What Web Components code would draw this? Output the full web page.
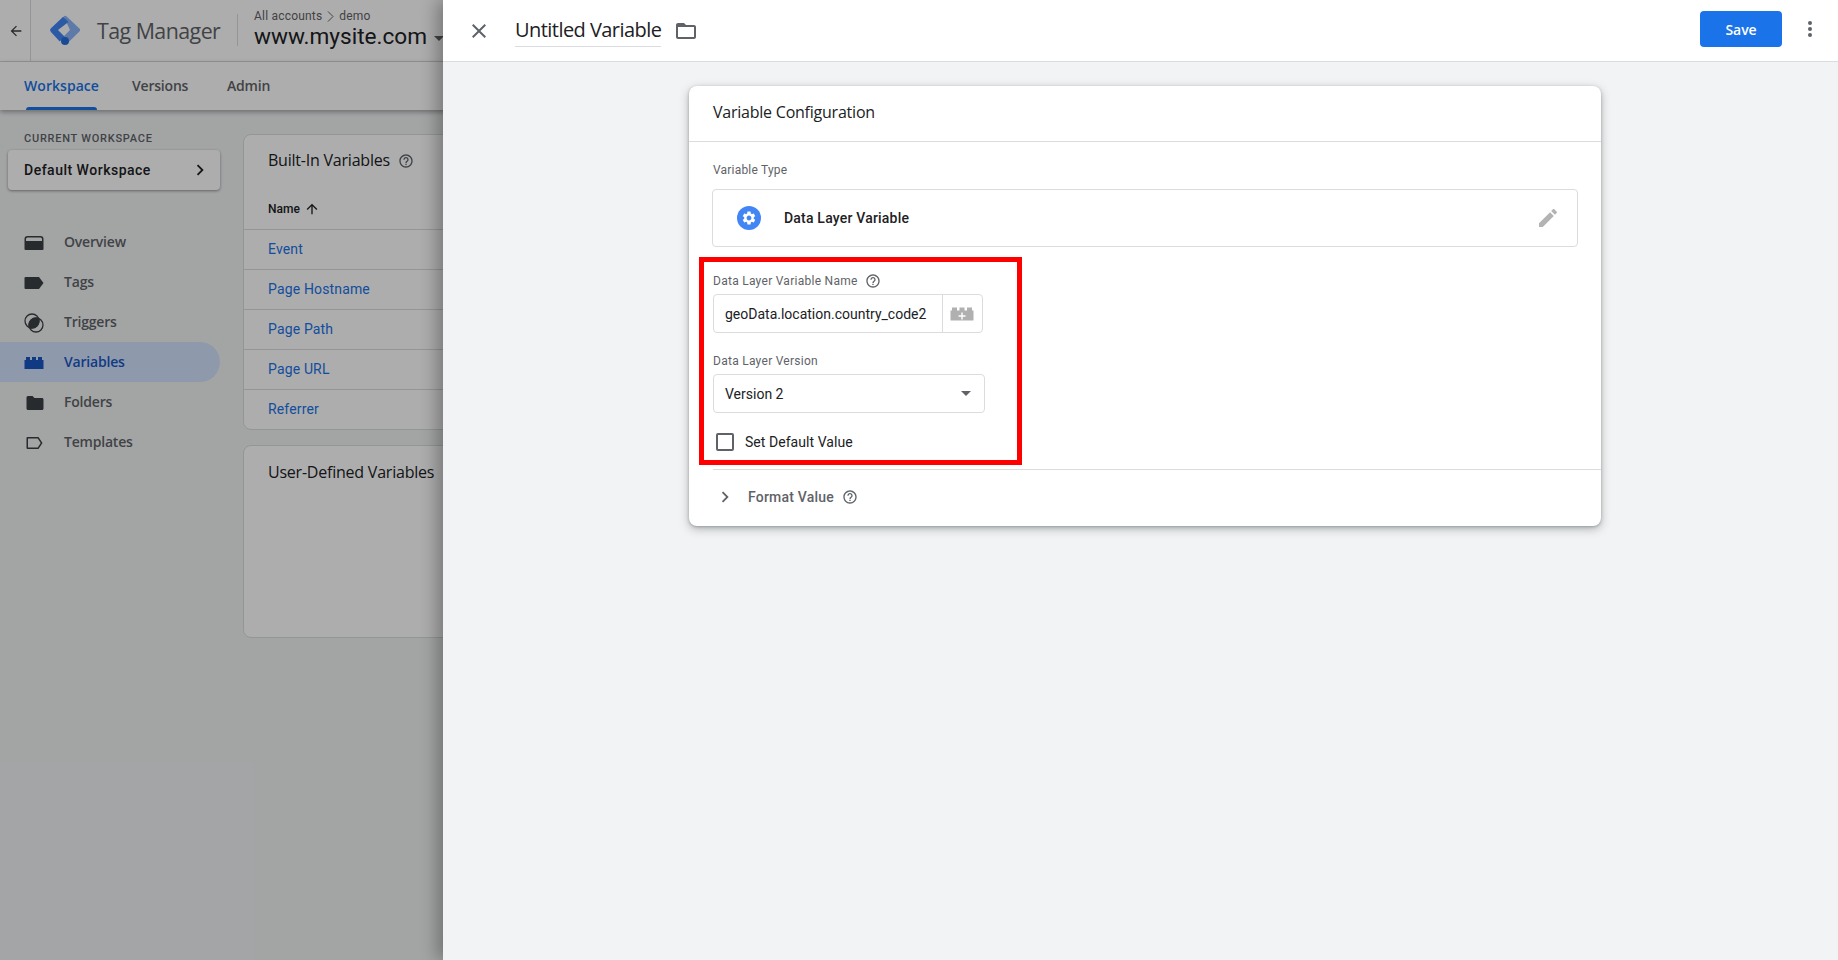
<!DOCTYPE html>
<html>
<head>
<meta charset="utf-8">
<title>Tag Manager</title>
<style>
  html, body { margin: 0; height: 100%; overflow: hidden; }
  body { font-family: Roboto, "Liberation Sans", sans-serif; color: #202124; }
</style>
</head>
<body>
<gtm-app></gtm-app>

<script>
const ICONS = {
  back: '<path d="M20 11H7.83l5.59-5.59L12 4l-8 8 8 8 1.41-1.41L7.83 13H20z"/>',
  close: '<path d="M19 6.41 17.59 5 12 10.59 6.41 5 5 6.41 10.59 12 5 17.59 6.41 19 12 13.41 17.59 19 19 17.59 13.41 12z"/>',
  chevron: '<path d="M8.59 16.59 13.17 12 8.59 7.41 10 6l6 6-6 6z"/>',
  help: '<path d="M11 18h2v-2h-2v2zm1-16C6.48 2 2 6.48 2 12s4.48 10 10 10 10-4.48 10-10S17.52 2 12 2zm0 18c-4.41 0-8-3.59-8-8s3.59-8 8-8 8 3.59 8 8-3.59 8-8 8zm0-14c-2.21 0-4 1.79-4 4h2c0-1.1.9-2 2-2s2 .9 2 2c0 2-3 1.75-3 5h2c0-2.25 3-2.5 3-5 0-2.21-1.79-4-4-4z"/>',
  upward: '<path d="M4 12l1.41 1.41L11 7.83V20h2V7.83l5.58 5.59L20 12l-8-8-8 8z"/>',
  folderOpen: '<path d="M20 6h-8l-2-2H4c-1.1 0-1.99.9-1.99 2L2 18c0 1.1.9 2 2 2h16c1.1 0 2-.9 2-2V8c0-1.1-.9-2-2-2zm0 12H4V8h16v10z"/>',
  edit: '<path d="M3 17.25V21h3.75L17.81 9.94l-3.75-3.75L3 17.25zM20.71 7.04c.39-.39.39-1.02 0-1.41l-2.34-2.34c-.39-.39-1.02-.39-1.41 0l-1.83 1.83 3.75 3.75 1.83-1.83z"/>',
  more: '<circle cx="12" cy="6" r="2"/><circle cx="12" cy="12" r="2"/><circle cx="12" cy="18" r="2"/>',
  gear: '<path d="M19.14 12.94c.04-.3.06-.61.06-.94 0-.32-.02-.64-.07-.94l2.03-1.58a.49.49 0 0 0 .12-.61l-1.92-3.32a.488.488 0 0 0-.59-.22l-2.39.96c-.5-.38-1.03-.7-1.62-.94l-.36-2.54a.484.484 0 0 0-.48-.41h-3.84c-.24 0-.43.17-.47.41l-.36 2.54c-.59.24-1.13.57-1.62.94l-2.39-.96c-.22-.08-.47 0-.59.22L2.74 8.87c-.12.21-.08.47.12.61l2.03 1.58c-.05.3-.09.63-.09.94s.02.64.07.94l-2.03 1.58a.49.49 0 0 0-.12.61l1.92 3.32c.12.22.37.29.59.22l2.39-.96c.5.38 1.03.7 1.62.94l.36 2.54c.05.24.24.41.48.41h3.84c.24 0 .44-.17.47-.41l.36-2.54c.59-.24 1.13-.56 1.62-.94l2.39.96c.22.08.47 0 .59-.22l1.92-3.32c.12-.22.07-.47-.12-.61l-2.01-1.58zM12 15.6c-1.98 0-3.6-1.62-3.6-3.6s1.62-3.6 3.6-3.6 3.6 1.62 3.6 3.6-1.62 3.6-3.6 3.6z"/>',
  // sidebar glyphs, 24 box, 19 wide like the GTM ones
  overview: '<path d="M2.5 11V9Q2.5 6 5.500 6H18.500Q21.500 6 21.500 9V11H20V9Q20 7.500 18.500 7.500H5.500Q4 7.500 4 9V11z"/><path d="M2.500 11h19v8a1 1 0 0 1-1 1h-17a1 1 0 0 1-1-1z"/>',
  tags: '<path d="M3.500 7H17L21.500 13 17 19H3.500a1 1 0 0 1-1-1V8a1 1 0 0 1 1-1z"/>',
  triggers: '<circle cx="10" cy="11" r="7" fill="none" stroke="currentColor" stroke-width="1.300"/><circle cx="14" cy="15" r="7" fill="none" stroke="currentColor" stroke-width="1.300"/><path d="M16.910 8.090A7.500 7.500 0 0 0 7.090 17.910 7.500 7.500 0 0 0 16.910 8.090z"/>',
  variables: '<path d="M2.500 10H4V7H8V10H10V7H14V10H16V7H20V10H21.500V19H2.500z"/>',
  folder: '<path d="M10.500 6H6C5 6 4.500 6.800 4.500 7.500V18.500C4.500 19.400 5.200 20 6 20H20C20.900 20 21.500 19.400 21.500 18.500V9.500C21.500 8.600 20.900 8 20 8H12.500z"/>',
  templates: '<path fill-rule="evenodd" d="M5.500 7H16.500L20.500 13 16.500 19H5.500a1 1 0 0 1-1-1V8a1 1 0 0 1 1-1zM6 8.500V17.500H15.700L18.700 13 15.700 8.500z"/>',
  addVar: '<path fill-rule="evenodd" d="M.5 8.500H2V5.500H7V8.500H9.500V5.500H14.500V8.500H17V5.500H22V8.500H23.500V18.500H.5zM11.300 10.500V13.300H8.500V14.700H11.300V17.500H12.700V14.700H15.500V13.300H12.700V10.500z"/>'
};

// small base class so each element only has to give its template
class GtmElement extends HTMLElement {
  constructor() {
    super();
    this.attachShadow({ mode: 'open' });
    const t = document.createElement('template');
    t.innerHTML = this.markup();
    this.shadowRoot.appendChild(t.content.cloneNode(true));
  }
  attr(name, fallback = '') {
    return this.hasAttribute(name) ? this.getAttribute(name) : fallback;
  }
  markup() { return ''; }
}

class GtmIcon extends GtmElement {
  markup() {
    const size = this.attr('size', '24');
    const w = this.attr('width', size);
    return `<style>
      :host { display: inline-flex; flex: none; color: inherit; }
      svg { display: block; fill: currentColor; }
    </style>
    <svg width="${w}" height="${size}" viewBox="0 0 24 24" preserveAspectRatio="none">${ICONS[this.attr('name')] || ''}</svg>`;
  }
}

class GtmHeader extends GtmElement {
  markup() {
    return `<style>
      :host { display: flex; align-items: stretch; height: 61px; background: #fff; border-bottom: 1px solid #dadce0; }
      .back { width: 31px; box-sizing: border-box; border-right: 1px solid #dadce0; display: flex; align-items: center; justify-content: center; padding-left: 1px; color: #3c4043; }
      .logo { margin: 15px 17px 0 19px; }
      .product { font: 400 21.4px/62px "Open Sans", sans-serif; letter-spacing: -.55px; color: #5f6368; white-space: nowrap; width: 140px; }
      .sep { width: 1px; height: 32px; margin: 14px 16px 0 0; background: #dadce0; }
      .crumb { font: 400 12px/14px Roboto, sans-serif; letter-spacing: .2px; color: #5f6368; margin-top: 9px; display: flex; align-items: center; gap: 5px; }
      .crumb svg { width: 7px; height: 11px; fill: none; stroke: #5f6368; stroke-width: 1; }
      .site { font: 400 22.6px/26px Roboto, sans-serif; color: #202124; white-space: nowrap; margin-top: 1px; }
      .caret { display: inline-block; width: 0; height: 0; border: 5px solid transparent; border-top-color: #5f6368; border-bottom: 0; margin-left: 7px; vertical-align: middle; }
    </style>
    <div class="back"><gtm-icon name="back" size="16"></gtm-icon></div>
    <svg class="logo" width="30" height="30" viewBox="0 0 30 30">
      <path d="M13.700 1.300a2 2 0 0 1 2.700 0l13 12.200a2 2 0 0 1 0 3L17 28.800l-5.300-5.300L20 15z" fill="#8ab4f8"/>
      <path d="M13.200 1.800 18.400 7 8 15l6.500 6.500-4.800 5-8.500-9.300a3 3 0 0 1 0-4.300z" fill="#4285f4"/>
      <circle cx="15" cy="26" r="4" fill="#246fdb"/>
    </svg>
    <div class="product">Tag Manager</div>
    <div class="sep"></div>
    <div>
      <div class="crumb">All accounts <svg viewBox="0 0 7 11"><path d="M1 .5 6 5.500 1 10.500"/></svg> demo</div>
      <div class="site">www.mysite.com<span class="caret"></span></div>
    </div>`;
  }
}

class GtmTabs extends GtmElement {
  markup() {
    return `<style>
      :host { display: flex; height: 48px; background: #fff; position: relative; z-index: 1; box-shadow: 0 2px 5px rgba(0,0,0,.35); padding-left: 24px;
              font: 600 14px/48px "Open Sans", sans-serif; letter-spacing: -.2px; color: #5f6368; }
      div { position: relative; }
      .on { color: #1a73e8; width: 75px; margin-right: 33px; letter-spacing: .05px; }
      .on::after { content: ""; position: absolute; left: 2px; right: 2px; bottom: 0; height: 3px; background: #1a73e8; border-radius: 3px 3px 0 0; }
      .mid { width: 56px; margin-right: 39px; }
    </style>
    <div class="on">Workspace</div><div class="mid">Versions</div><div>Admin</div>`;
  }
}

class GtmNavItem extends GtmElement {
  markup() {
    return `<style>
      :host { display: flex; align-items: center; height: 40px; padding-left: 21.5px; gap: 18.5px;
              font: 600 14px/20px "Open Sans", sans-serif; letter-spacing: -.2px; color: #5f6368; border-radius: 0 20px 20px 0; }
      :host([active]) { background: #d2e3fc; color: #1a56c4; }
      gtm-icon { color: #3c4043; }
      :host([active]) gtm-icon { color: #1a56c4; }
    </style>
    <gtm-icon name="${this.attr('icon')}" size="24"></gtm-icon><slot></slot>`;
  }
}

class GtmSidebar extends GtmElement {
  markup() {
    return `<style>
      :host { display: block; width: 220px; flex: none; }
      .label { font: 500 11px/13px Roboto, sans-serif; letter-spacing: .75px; color: #5f6368; margin: 22px 0 5px 24px; }
      .ws { height: 40px; margin-left: 8px; padding: 0 15px 0 16px; display: flex; align-items: center; justify-content: space-between; background: #fff; border-radius: 4px;
            box-shadow: 0 1px 3px rgba(60,64,67,.55); font: 500 14px/20px Roboto, sans-serif; letter-spacing: .5px; color: #202124; }
      nav { margin-top: 32px; display: block; }
    </style>
    <div class="label">CURRENT WORKSPACE</div>
    <div class="ws">Default Workspace <gtm-icon name="chevron" size="22" style="margin-right:-6px"></gtm-icon></div>
    <nav><slot></slot></nav>`;
  }
}

class GtmVarTable extends GtmElement {
  markup() {
    const sortable = this.hasAttribute('sortable');
    return `<style>
      :host { display: block; background: #fff; border: 1px solid #dadce0; border-radius: 8px; width: 1400px; box-sizing: border-box; }
      .title { font: 400 16px/20px "Open Sans", sans-serif; letter-spacing: -.22px; color: #202124; padding: ${sortable ? '15px 24px 16px' : '16px 24px 15px'}; display: flex; align-items: center; gap: 8px; }
      .title gtm-icon { color: #5f6368; margin-top: 2px; }
      .sort { font: 500 12px/16px Roboto, sans-serif; padding: 15px 24px 12px; height: 16px; display: flex; align-items: center; gap: 4px; color: #202124; }
      ::slotted(a) { display: block; border-top: 1px solid #dadce0; height: 39px; padding-left: 24px; font: 400 14px/39px Roboto, sans-serif; letter-spacing: .15px; color: #1a73e8; text-decoration: none; }
    </style>
    <div class="title">${this.attr('title')}${this.hasAttribute('help') ? '<gtm-icon name="help" size="16"></gtm-icon>' : ''}</div>
    ${sortable ? '<div class="sort">Name <gtm-icon name="upward" size="16"></gtm-icon></div>' : ''}
    <slot></slot>`;
  }
}

class GtmField extends GtmElement {
  markup() {
    return `<style>
      :host { display: block; font: 400 14px/20px Roboto, sans-serif; }
      .lab { font: 400 12px/16px Roboto, sans-serif; letter-spacing: .27px; color: #5f6368; display: flex; align-items: center; gap: 7px; height: 16px; margin-bottom: 5px; }
      .lab gtm-icon { color: #5f6368; }
      .row { height: 37px; border: 1px solid #dadce0; border-radius: 4px; display: flex; align-items: center; color: #202124; padding-left: 11px; }
      ::slotted(*) { display: flex; width: 100%; align-items: center; }
    </style>
    <div class="lab">${this.attr('label')}${this.hasAttribute('help') ? '<gtm-icon name="help" size="16"></gtm-icon>' : ''}</div>
    <div class="row"><slot></slot></div>`;
  }
}

class GtmVariableCard extends GtmElement {
  markup() {
    return `<style>
      :host { display: block; width: 912px; margin-left: 246px; background: #fff; border-radius: 8px; box-shadow: 0 3px 10px rgba(60,64,67,.35), 0 1px 3px rgba(60,64,67,.3); }
      .head { height: 55px; padding-left: 24px; border-bottom: 1px solid #dadce0; font: 400 16px/52px "Open Sans", sans-serif; letter-spacing: -.23px; color: #202124; }
      .cap { font: 400 12px/16px Roboto, sans-serif; letter-spacing: .2px; color: #5f6368; padding: 20px 0 11px 24px; }
      .type { margin: 0 23px; height: 56px; border: 1px solid #dadce0; border-radius: 4px; display: flex; align-items: center; padding-left: 24px; font: 500 14px/20px Roboto, sans-serif; letter-spacing: .2px; color: #202124; }
      .gear { width: 24px; height: 24px; border-radius: 50%; background: #4285f4; color: #fff; display: flex; align-items: center; justify-content: center; margin-right: 23px; }
      .pen { margin-left: auto; margin-right: 17px; color: #b3b3b3; }
      .mark { width: 304px; height: 187px; margin: 10px 0 0 10px; border: 5px solid #f00; padding: 11px 0 0 9px; }
      .name { width: 270px; }
      .val { flex: 1; }
      .pick { width: 37px; padding-right: 2px; height: 37px; border-left: 1px solid #dadce0; display: flex; align-items: center; justify-content: center; color: #b0b0b0; }
      .ver { width: 272px; margin-top: 20px; }
      .arrow { width: 0; height: 0; border: 5px solid transparent; border-top-color: #5f6368; border-bottom: 0; margin-left: auto; margin-right: 13px; }
      .check { display: flex; align-items: center; gap: 11px; margin: 19px 0 0 3px; font: 400 14px/20px Roboto, sans-serif; color: #202124; letter-spacing: .05px; }
      .box { width: 14px; height: 14px; border: 2px solid #5f6368; border-radius: 2px; }
      .fmt { margin: 4px 0 0 24px; border-top: 1px solid #dadce0; height: 54px; padding-bottom: 2px; display: flex; align-items: center; color: #5f6368; font: 500 14px/20px Roboto, sans-serif; letter-spacing: .2px; }
      .chev { margin-left: 1px; margin-right: 12px; }
      .q { margin-left: 8px; }
    </style>
    <div class="head">Variable Configuration</div>
    <div class="cap">Variable Type</div>
    <div class="type">
      <span class="gear"><gtm-icon name="gear" size="16"></gtm-icon></span>
      Data Layer Variable
      <gtm-icon class="pen" name="edit" size="24"></gtm-icon>
    </div>
    <div class="mark">
      <gtm-field class="name" label="Data Layer Variable Name" help>
        <span>
          <span class="val">geoData.location.country_code2</span>
          <span class="pick"><gtm-icon name="addVar" size="24"></gtm-icon></span>
        </span>
      </gtm-field>
      <gtm-field class="ver" label="Data Layer Version">
        <span>Version 2<span class="arrow"></span></span>
      </gtm-field>
      <div class="check"><span class="box"></span>Set Default Value</div>
    </div>
    <div class="fmt"><gtm-icon class="chev" name="chevron" size="22"></gtm-icon>Format Value<gtm-icon class="q" name="help" size="16"></gtm-icon></div>`;
  }
}

class GtmDrawer extends GtmElement {
  markup() {
    return `<style>
      :host { display: block; position: absolute; left: 443px; top: 0; right: 0; bottom: 0; background: #f1f3f4; box-shadow: -6px 0 16px rgba(0,0,0,.3); z-index: 3; }
      .bar { height: 61px; background: #fff; border-bottom: 1px solid #dadce0; display: flex; align-items: center; }
      .x { color: #5f6368; margin: 0 24px; }
      .title { font: 400 20px/35px "Open Sans", sans-serif; letter-spacing: -.55px; color: #202124; border-bottom: 1px solid #dadce0; height: 35px; box-sizing: border-box; margin-top: -2px; }
      .folder { color: #5f6368; margin-left: 13px; }
      .save { margin-left: auto; margin-right: 16px; width: 82px; height: 36px; background: #1a73e8; color: #fff; border-radius: 4px; display: flex; align-items: center; justify-content: center;
              font: 600 14px/20px "Open Sans", sans-serif; letter-spacing: -.1px; margin-top: -3px; padding-top: 1px; box-sizing: border-box; }
      .more { color: #5f6368; margin-right: 16px; margin-top: -4px; }
      .content { padding-top: 24px; }
    </style>
    <div class="bar">
      <gtm-icon class="x" name="close" size="24"></gtm-icon>
      <div class="title">Untitled Variable</div>
      <gtm-icon class="folder" name="folderOpen" size="24"></gtm-icon>
      <div class="save">Save</div>
      <gtm-icon class="more" name="more" size="24"></gtm-icon>
    </div>
    <div class="content"><gtm-variable-card></gtm-variable-card></div>`;
  }
}

class GtmApp extends GtmElement {
  markup() {
    return `<style>
      :host { display: block; position: relative; width: 100%; height: 100vh; overflow: hidden; background: #f1f3f4; }
      .body { display: flex; }
      main { padding: 24px 0 0 23px; display: flex; flex-direction: column; gap: 15px; }
      .scrim { position: absolute; inset: 0; background: rgba(0,0,0,.32); z-index: 2; }
    </style>
    <gtm-header></gtm-header>
    <gtm-tabs></gtm-tabs>
    <div class="body">
      <gtm-sidebar>
        <gtm-nav-item icon="overview">Overview</gtm-nav-item>
        <gtm-nav-item icon="tags">Tags</gtm-nav-item>
        <gtm-nav-item icon="triggers">Triggers</gtm-nav-item>
        <gtm-nav-item icon="variables" active>Variables</gtm-nav-item>
        <gtm-nav-item icon="folder">Folders</gtm-nav-item>
        <gtm-nav-item icon="templates">Templates</gtm-nav-item>
      </gtm-sidebar>
      <main>
        <gtm-var-table title="Built-In Variables" help sortable>
          <a>Event</a><a>Page Hostname</a><a>Page Path</a><a>Page URL</a><a>Referrer</a>
        </gtm-var-table>
        <gtm-var-table title="User-Defined Variables" style="height:193px"></gtm-var-table>
      </main>
    </div>
    <div class="scrim"></div>
    <gtm-drawer></gtm-drawer>`;
  }
}

// children first so upgrades inside shadow roots find their classes
customElements.define('gtm-icon', GtmIcon);
customElements.define('gtm-header', GtmHeader);
customElements.define('gtm-tabs', GtmTabs);
customElements.define('gtm-nav-item', GtmNavItem);
customElements.define('gtm-sidebar', GtmSidebar);
customElements.define('gtm-var-table', GtmVarTable);
customElements.define('gtm-field', GtmField);
customElements.define('gtm-variable-card', GtmVariableCard);
customElements.define('gtm-drawer', GtmDrawer);
customElements.define('gtm-app', GtmApp);
</script>
</body>
</html>
